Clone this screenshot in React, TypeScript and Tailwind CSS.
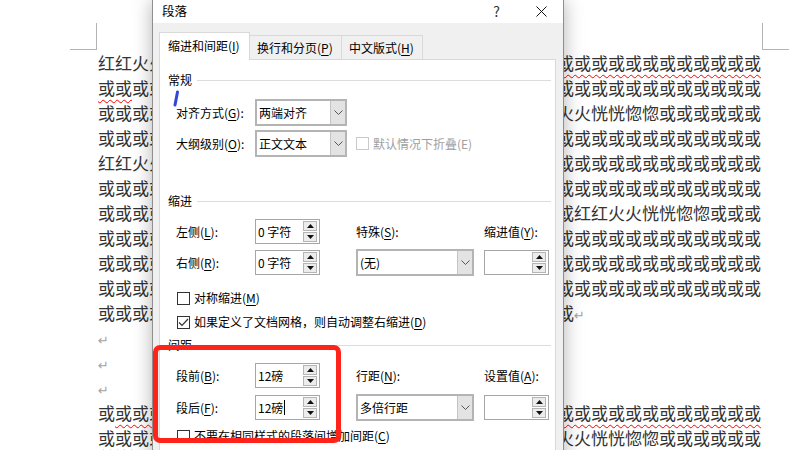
import React from 'react';

type Seg = { t: string; wavy?: boolean; mark?: boolean };

const R = (n: number) => '或'.repeat(n);
const H = '红红火火恍恍惚惚';

const docLines: Seg[][] = [
  [{ t: H }, { t: R(31), wavy: true }],
  [{ t: R(2), wavy: true }, { t: R(37) }],
  [{ t: R(25) + H + R(6) }],
  [{ t: R(39) }],
  [{ t: H + R(31) }],
  [{ t: R(39) }],
  [{ t: R(28) + H + R(3) }],
  [{ t: R(39) }],
  [{ t: R(39) }],
  [{ t: R(39) }],
  [{ t: R(28) }, { t: '↵', mark: true }],
  [{ t: '↵', mark: true }],
  [{ t: '↵', mark: true }],
  [{ t: '↵', mark: true }],
  [{ t: R(1) }, { t: R(38), wavy: true }],
  [{ t: R(2), wavy: true }, { t: R(23) + H + R(6) }],
];

const Key: React.FC<{ pre: string; k: string; post?: string }> = ({ pre, k, post = '):' }) => (
  <span>
    {pre}(<u className="underline-offset-2">{k}</u>{post}
  </span>
);

const Chevron = () => (
  <svg width="9" height="5" viewBox="0 0 9 5">
    <path d="M0.5 0.5 L4.5 4.5 L8.5 0.5" fill="none" stroke="#555" strokeWidth="1" />
  </svg>
);

const Select: React.FC<{ value?: string; className: string }> = ({ value, className }) => (
  <div className={`flex h-[27px] border-2 border-[#b4b4b4] bg-white ${className}`}>
    <div className="flex flex-1 items-center pl-[2px]">{value}</div>
    <div className="flex w-[15px] items-center justify-center border-l border-[#c4c4c4] bg-[#e3e3e3]">
      <Chevron />
    </div>
  </div>
);

const SpinBtn: React.FC<{ up?: boolean }> = ({ up }) => (
  <div className="flex flex-1 items-center justify-center border border-[#b5b5b5] bg-[#ececec]">
    <svg width="7" height="4" viewBox="0 0 7 4">
      {up ? <polygon points="0,4 7,4 3.5,0" fill="#111" /> : <polygon points="0,0 7,0 3.5,4" fill="#111" />}
    </svg>
  </div>
);

const Spin: React.FC<{ value?: string; cursor?: boolean }> = ({ value, cursor }) => (
  <div className="flex h-[25px] w-[65px] border border-[#a6a6a6] bg-white">
    <div className="flex flex-1 items-center pl-[2px]">
      {value}
      {cursor && <span className="ml-px inline-block h-[15px] w-px bg-black" />}
    </div>
    <div className="flex w-[16px] flex-col gap-px py-px pr-[2px]">
      <SpinBtn up />
      <SpinBtn />
    </div>
  </div>
);

const Check: React.FC<{ checked?: boolean; disabled?: boolean }> = ({ checked, disabled }) => (
  <div
    className={`flex h-[13px] w-[13px] items-center justify-center border bg-white ${
      disabled ? 'border-[#cacaca]' : 'border-[#333]'
    }`}
  >
    {checked && (
      <svg width="11" height="9" viewBox="0 0 11 9">
        <path d="M1 4.5 L4 7.5 L10 1" fill="none" stroke="#333" strokeWidth="1.2" />
      </svg>
    )}
  </div>
);

const Section: React.FC<{ title: string; className: string }> = ({ title, className }) => (
  <div className={`flex h-[16px] items-center ${className}`}>
    <span>{title}</span>
    <div className="ml-[5px] h-px flex-1 bg-[#dcdcdc]" />
  </div>
);

export default function App() {
  return (
    <div className="relative h-[450px] w-[800px] overflow-hidden bg-white font-['Noto_Sans_CJK_SC',sans-serif]">
      {/* document page */}
      <div className="relative pl-[98px] pt-[50px] text-[17px] text-[#333]">
        <div className="absolute left-[70px] top-[23px] h-[27px] w-[27px] border-b border-r border-[#b3b3b3]" />
        <div className="absolute left-[762px] top-[23px] h-[27px] w-[27px] border-b border-l border-[#b3b3b3]" />
        {docLines.map((line, i) => (
          <div key={i} className="h-[25px] whitespace-nowrap leading-[25px]">
            {line.map((s, j) =>
              s.mark ? (
                <span key={j} className="font-['DejaVu_Sans',sans-serif] text-[13px] text-[#a3a3a3]">
                  {s.t}
                </span>
              ) : (
                <span
                  key={j}
                  className={
                    s.wavy ? 'underline decoration-[#ff0000] decoration-wavy decoration-1 underline-offset-[4px]' : ''
                  }
                >
                  {s.t}
                </span>
              )
            )}
          </div>
        ))}
      </div>

      {/* paragraph dialog */}
      <div className="absolute left-[152px] top-0 flex h-[470px] w-[412px] flex-col border-x border-[#8f8f8f] bg-[#f0f0f0] text-[12px] text-black shadow-[0_0_18px_rgba(0,0,0,0.3)]">
        <div className="flex h-[23px] items-center bg-white pl-[9px] pr-[16px]">
          <span className="text-[12.5px]">段落</span>
          <div className="flex-1" />
          <span className="mr-[36px] text-[14px] text-[#333]">?</span>
          <svg width="11" height="11" viewBox="0 0 11 11">
            <path d="M0.5 0.5 L10.5 10.5 M10.5 0.5 L0.5 10.5" stroke="#111" strokeWidth="1" />
          </svg>
        </div>

        <div className="flex flex-1 flex-col pl-[6px] pr-[7px] pt-[9px]">
          <div className="relative z-10 -mb-px flex h-[28px] items-end">
            <div className="flex h-[28px] w-[91px] items-center border border-b-0 border-[#d9d9d9] bg-white pb-px pl-[8px]">
              <Key pre="缩进和间距" k="I" post=")" />
            </div>
            <div className="flex h-[25px] w-[92px] items-center border border-l-0 border-[#d9d9d9] bg-[#f0f0f0] pl-[7px]">
              <Key pre="换行和分页" k="P" post=")" />
            </div>
            <div className="flex h-[25px] w-[81px] items-center border border-l-0 border-[#d9d9d9] bg-[#f0f0f0] pl-[7px]">
              <Key pre="中文版式" k="H" post=")" />
            </div>
          </div>

          <div className="flex flex-1 flex-col border border-[#d9d9d9] bg-white pl-[8px] pr-[4px]">
            <Section title="常规" className="mt-[12px]" />

            <div className="mt-[11px] flex h-[27px] items-center pl-[8px]">
              <div className="w-[79px]"><Key pre="对齐方式" k="G" /></div>
              <Select value="两端对齐" className="w-[92px]" />
            </div>
            <div className="mt-[4px] flex h-[27px] items-center pl-[8px]">
              <div className="w-[79px]"><Key pre="大纲级别" k="O" /></div>
              <Select value="正文文本" className="w-[92px]" />
              <div className="ml-[9px] flex items-center gap-[4px] text-[#a0a0a0]">
                <Check disabled />
                <span>默认情况下折叠(E)</span>
              </div>
            </div>

            <Section title="缩进" className="mt-[36px]" />

            <div className="mt-[10px] flex h-[25px] items-center pl-[8px]">
              <div className="w-[79px]"><Key pre="左侧" k="L" /></div>
              <Spin value="0 字符" />
              <div className="ml-[36px] w-[128px]"><Key pre="特殊" k="S" /></div>
              <Key pre="缩进值" k="Y" />
            </div>
            <div className="mt-[5px] flex h-[27px] items-center pl-[8px]">
              <div className="w-[79px]"><Key pre="右侧" k="R" /></div>
              <Spin value="0 字符" />
              <Select value="(无)" className="ml-[36px] w-[118px]" />
              <div className="ml-[10px]"><Spin /></div>
            </div>

            <div className="mt-[12px] flex h-[20px] items-center gap-[4px] pl-[9px]">
              <Check />
              <Key pre="对称缩进" k="M" post=")" />
            </div>
            <div className="mt-[4px] flex h-[20px] items-center gap-[4px] pl-[9px]">
              <Check checked />
              <Key pre="如果定义了文档网格，则自动调整右缩进" k="D" post=")" />
            </div>

            <Section title="间距" className="mt-[5px]" />

            <div className="mt-[10px] flex h-[25px] items-center pl-[8px]">
              <div className="w-[79px]"><Key pre="段前" k="B" /></div>
              <Spin value="12磅" />
              <div className="ml-[36px] w-[128px]"><Key pre="行距" k="N" /></div>
              <Key pre="设置值" k="A" />
            </div>
            <div className="mt-[6px] flex h-[27px] items-center pl-[8px]">
              <div className="w-[79px]"><Key pre="段后" k="F" /></div>
              <Spin value="12磅" cursor />
              <Select value="多倍行距" className="ml-[36px] w-[118px]" />
              <div className="ml-[10px]"><Spin /></div>
            </div>

            <div className="mt-[5px] flex h-[20px] items-center gap-[4px] pl-[9px]">
              <Check />
              <Key pre="不要在相同样式的段落间增加间距" k="C" post=")" />
            </div>
          </div>
        </div>
      </div>

      {/* blue pen mark */}
      <svg className="absolute left-[170px] top-[89px]" width="12" height="20" viewBox="0 0 12 20">
        <path d="M7.5 3 L5 16" stroke="#3346d4" strokeWidth="3" strokeLinecap="round" />
      </svg>

      {/* red annotation box */}
      <div className="absolute left-[153px] top-[345px] h-[98px] w-[188px] rounded-[7px] border-[5px] border-[#ff2419]" />
    </div>
  );
}
